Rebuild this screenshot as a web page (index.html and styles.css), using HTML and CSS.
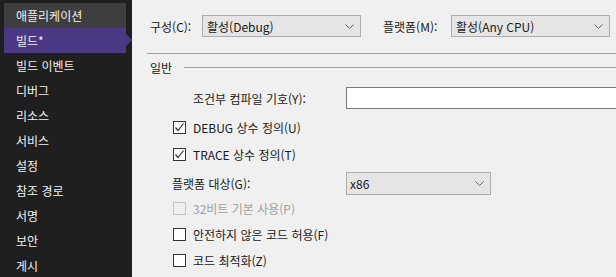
FILE: index.html
```html
<!DOCTYPE html>
<html lang="ko">
<head>
<meta charset="utf-8">
<link rel="stylesheet" href="styles.css">
</head>
<body>
<div class="app">
  <nav class="sidebar">
    <div class="nav-item hover">애플리케이션</div>
    <div class="nav-item active">빌드*</div>
    <div class="nav-item">빌드 이벤트</div>
    <div class="nav-item">디버그</div>
    <div class="nav-item">리소스</div>
    <div class="nav-item">서비스</div>
    <div class="nav-item">설정</div>
    <div class="nav-item">참조 경로</div>
    <div class="nav-item">서명</div>
    <div class="nav-item">보안</div>
    <div class="nav-item">게시</div>
  </nav>
  <main class="pane">
    <div class="top-row">
      <span class="label config-label">구성(C):</span>
      <div class="combo wide"><span>활성(Debug)</span><svg class="chev" width="9" height="5" viewBox="0 0 9 5"><polyline points="0.5,0.5 4.5,4.5 8.5,0.5" fill="none" stroke="#606060" stroke-width="1"/></svg></div>
      <span class="label platform-label">플랫폼(M):</span>
      <div class="combo wide"><span>활성(Any CPU)</span><svg class="chev" width="9" height="5" viewBox="0 0 9 5"><polyline points="0.5,0.5 4.5,4.5 8.5,0.5" fill="none" stroke="#606060" stroke-width="1"/></svg></div>
    </div>
    <div class="sep"></div>
    <div class="group-head"><span>일반</span><div class="group-line"></div></div>
    <div class="field-row">
      <span class="label symbols-label">조건부 컴파일 기호(Y):</span>
      <div class="textbox"></div>
    </div>
    <div class="check-row tall"><span class="box"><svg width="11" height="11" viewBox="0 0 11 11"><polyline points="1.5,5.5 4,8.5 9.5,1.5" fill="none" stroke="#333" stroke-width="1.2"/></svg></span><span>DEBUG 상수 정의(U)</span></div>
    <div class="check-row tall"><span class="box"><svg width="11" height="11" viewBox="0 0 11 11"><polyline points="1.5,5.5 4,8.5 9.5,1.5" fill="none" stroke="#333" stroke-width="1.2"/></svg></span><span>TRACE 상수 정의(T)</span></div>
    <div class="field-row target-row">
      <span class="label target-label">플랫폼 대상(G):</span>
      <div class="combo narrow"><span>x86</span><svg class="chev" width="9" height="5" viewBox="0 0 9 5"><polyline points="0.5,0.5 4.5,4.5 8.5,0.5" fill="none" stroke="#606060" stroke-width="1"/></svg></div>
    </div>
    <div class="check-row disabled"><span class="box"></span><span>32비트 기본 사용(P)</span></div>
    <div class="check-row"><span class="box"></span><span>안전하지 않은 코드 허용(F)</span></div>
    <div class="check-row"><span class="box"></span><span>코드 최적화(Z)</span></div>
  </main>
</div>
</body>
</html>
```
FILE: styles.css
```css
html, body {
  margin: 0;
  padding: 0;
  width: 616px;
  height: 277px;
  overflow: hidden;
  font-family: "Noto Sans CJK KR", "Noto Sans", sans-serif;
  font-size: 12px;
}
.app {
  display: flex;
  height: 277px;
}
.sidebar {
  width: 132px;
  flex: none;
  background: #1f1f1f;
  padding-top: 3px;
  box-sizing: border-box;
}
.nav-item {
  position: relative;
  margin-left: 4px;
  width: 122px;
  height: 25px;
  line-height: 25px;
  padding-left: 12px;
  box-sizing: border-box;
  color: #f1f1f1;
}
.nav-item.hover {
  background: #3e3e3e;
}
.nav-item.active {
  background: #4a3885;
}
.nav-item.active::after {
  content: "";
  position: absolute;
  right: -6px;
  top: 6px;
  border-left: 6px solid #4a3885;
  border-top: 6.5px solid transparent;
  border-bottom: 6.5px solid transparent;
}
.pane {
  flex: 1;
  background: #f0f0f0;
  padding-left: 15px;
  color: #1a1a1a;
  overflow: hidden;
}
.top-row {
  display: flex;
  align-items: center;
  margin-top: 15px;
  height: 22px;
  padding-left: 3px;
}
.label {
  flex: none;
  white-space: nowrap;
}
.config-label { width: 52px; }
.platform-label { width: 68px; margin-left: 22px; }
.combo {
  flex: none;
  display: flex;
  align-items: center;
  justify-content: space-between;
  height: 22px;
  box-sizing: border-box;
  background: #e5e5e5;
  border: 1px solid #adadad;
  padding: 0 6px 0 4px;
  white-space: nowrap;
}
.combo.wide { width: 159px; }
.combo.narrow { width: 145px; height: 23px; padding-left: 3px; }
.sep {
  margin-top: 16px;
  height: 0;
  border-top: 1px solid #a0a0a0;
}
.group-head {
  display: flex;
  align-items: center;
  margin-top: 6px;
  height: 14px;
  padding-left: 3px;
}
.group-line {
  flex: 1;
  margin-left: 12px;
  border-top: 1px solid #a0a0a0;
}
.field-row {
  display: flex;
  align-items: center;
  margin-top: 13px;
  height: 22px;
}
.symbols-label {
  width: 153px;
  padding-left: 46px;
  box-sizing: content-box;
  white-space: nowrap;
}
.textbox {
  flex: none;
  width: 300px;
  height: 22px;
  box-sizing: border-box;
  background: #fff;
  border: 1px solid #7a7a7a;
}
.target-row {
  margin-top: 4px;
  height: 23px;
}
.target-label {
  width: 174px;
  padding-left: 25px;
}
.check-row {
  display: flex;
  align-items: center;
  height: 26px;
  padding-left: 26px;
}
.check-row.tall {
  height: 27px;
}
.field-row + .check-row.tall {
  margin-top: 5px;
}
.box {
  flex: none;
  width: 13px;
  height: 13px;
  box-sizing: border-box;
  border: 1px solid #333;
  background: #fff;
  margin-right: 7px;
  display: flex;
  align-items: center;
  justify-content: center;
}
.check-row.disabled {
  color: #a0a0a0;
}
.check-row.disabled .box {
  border-color: #c4c4c4;
  background: #f0f0f0;
}
```
